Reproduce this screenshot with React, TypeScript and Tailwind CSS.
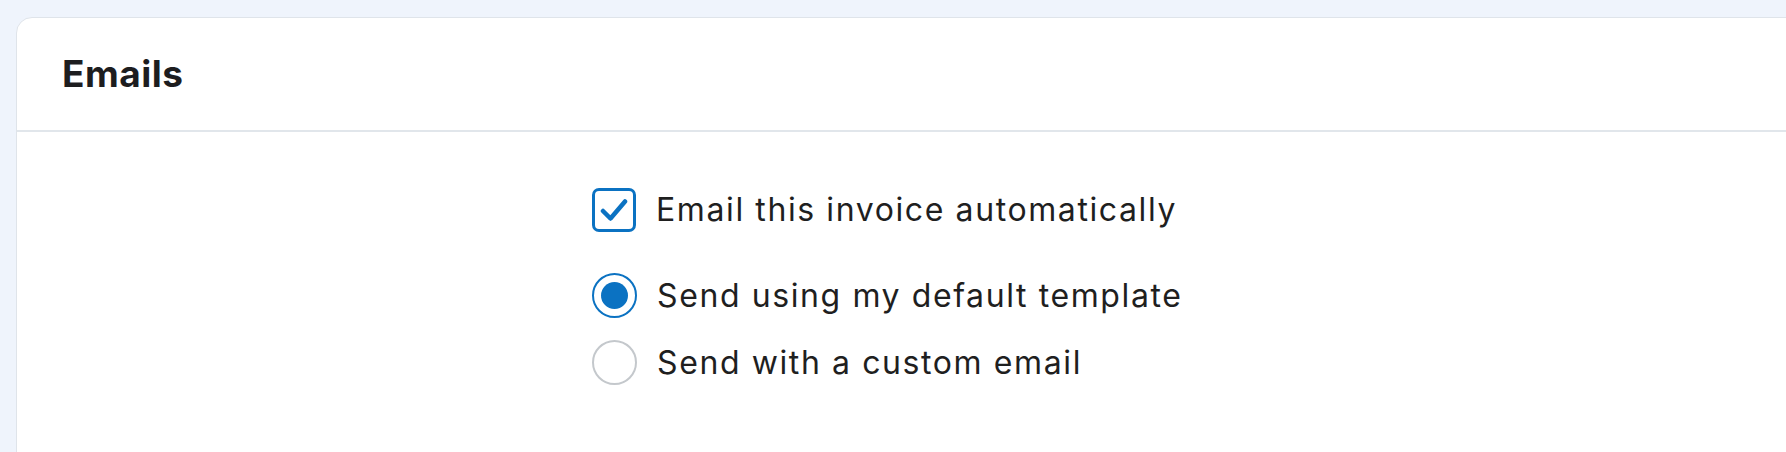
export default function App() {
  return (
    <div className="min-h-[452px] bg-[#eff4fc] pt-[17px] pl-[16px] overflow-hidden" style={{ fontFamily: 'Inter, "Noto Sans", sans-serif' }}>
      <div className="w-[1800px] h-[460px] bg-white border border-[#dfe4ea] rounded-tl-[16px]">
        <div className="h-[114px] border-b-2 border-[#e1e6eb] flex items-center pl-[45px]">
          <h2 className="text-[37px] font-bold text-[#1d1d1f] tracking-[0.5px]">Emails</h2>
        </div>
        <div className="pl-[575px] pt-[55px] flex flex-col text-[32px] tracking-[1.6px] text-[#1f1f1f]">
          <label className="flex items-center gap-[20px] h-[45px]">
            <span className="w-[44px] h-[44px] rounded-[7px] border-[3px] border-[#0b72c2] flex items-center justify-center">
              <svg width="28" height="24" viewBox="0 0 28 24" fill="none">
                <path d="M3 13 L10.5 20.5 L25 3.5" stroke="#0b72c2" strokeWidth="4.5" strokeLinecap="round" strokeLinejoin="round" />
              </svg>
            </span>
            <span>Email this invoice automatically</span>
          </label>
          <label className="flex items-center gap-[20px] h-[45px] mt-[41px]">
            <span className="w-[45px] h-[45px] rounded-full border-2 border-[#0b72c2] flex items-center justify-center">
              <span className="w-[27px] h-[27px] rounded-full bg-[#0b72c2]" />
            </span>
            <span>Send using my default template</span>
          </label>
          <label className="flex items-center gap-[20px] h-[45px] mt-[22px]">
            <span className="w-[45px] h-[45px] rounded-full border-2 border-[#c4c8cc]" />
            <span>Send with a custom email</span>
          </label>
        </div>
      </div>
    </div>
  );
}
